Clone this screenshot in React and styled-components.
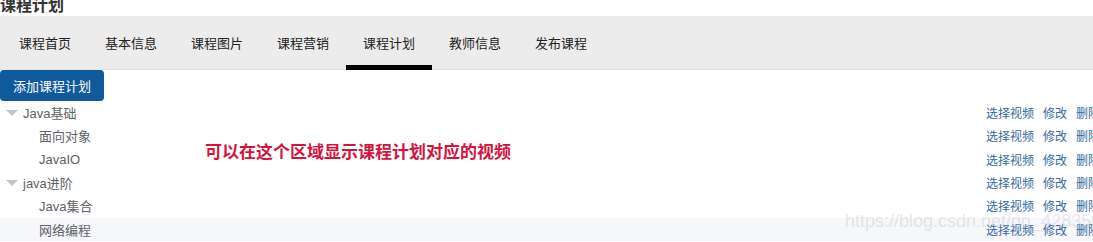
import React from 'react'
import styled, {createGlobalStyle} from 'styled-components'

const GlobalStyle = createGlobalStyle`
    html, body {
        margin: 0;
        padding: 0;
        overflow: hidden;
        background: #fff;
    }
    body {
        font-family: "Liberation Sans", "Noto Sans CJK SC", sans-serif;
    }
`;

const Page = styled.div`
    width: 1102px;
    position: relative;
`;

const Title = styled.h3`
    margin: -4px 0 0 0;
    height: 20px;
    line-height: 20px;
    font-size: 16px;
    font-weight: bold;
    color: #333;
`;

const TabBar = styled.nav`
    display: flex;
    width: 1093px;
    height: 54px;
    padding-left: 2px;
    background: #ececec;
    border-bottom: 1px solid #e3e3e3;
    box-sizing: border-box;
`;

const Tab = styled.div`
    box-sizing: border-box;
    height: 54px;
    padding: 3px 17px 0;
    display: flex;
    align-items: center;
    font-size: 13px;
    color: #222;
    border-bottom: 5px solid ${props => props.active ? '#000' : 'transparent'};
    cursor: pointer;
`;

const Toolbar = styled.div`
    display: flex;
`;

const AddButton = styled.button`
    height: 31px;
    padding: 0 13px;
    border: none;
    border-radius: 4px;
    background: #0f5a9b;
    color: #fff;
    font-family: inherit;
    font-size: 13px;
    cursor: pointer;
`;

const Tree = styled.div`
    position: relative;
`;

const Row = styled.div`
    display: flex;
    align-items: center;
    height: 23.33px;
    padding-left: ${props => props.level * 16}px;
    background: ${props => props.hover ? '#f5f7fa' : 'transparent'};
    font-size: 13px;
    color: #606266;
`;

const Caret = styled.span`
    width: 12px;
    height: 12px;
    margin: 0 5px 0 6px;
    display: flex;
    align-items: center;
    justify-content: center;
    &::before {
        content: '';
        display: ${props => props.leaf ? 'none' : 'block'};
        border-left: 6px solid transparent;
        border-right: 6px solid transparent;
        border-top: 6px solid #c0c4cc;
    }
`;

const Label = styled.span`
    flex: 1;
`;

const Actions = styled.div`
    display: flex;
    gap: 9px;
    width: 116px;
`;

const Action = styled.a`
    font-size: 12px;
    color: #346aa0;
    text-decoration: none;
    white-space: nowrap;
    cursor: pointer;
`;

const Note = styled.div`
    position: absolute;
    left: 205px;
    top: 41px;
    font-family: "Noto Sans CJK SC", sans-serif;
    font-size: 17px;
    line-height: 17px;
    font-weight: bold;
    color: #d3143d;
`;

const Watermark = styled.div`
    position: absolute;
    left: 845px;
    top: 110px;
    font-family: "Liberation Sans", sans-serif;
    font-size: 18px;
    color: rgba(190, 190, 190, 0.35);
    pointer-events: none;
    white-space: nowrap;
`;

const tabs = ['课程首页', '基本信息', '课程图片', '课程营销', '课程计划', '教师信息', '发布课程']

const nodes = [
    {label: 'Java基础', level: 0},
    {label: '面向对象', level: 1},
    {label: 'JavaIO', level: 1},
    {label: 'java进阶', level: 0},
    {label: 'Java集合', level: 1},
    {label: '网络编程', level: 1, hover: true},
]

export default function App() {
    return (
        <Page>
            <GlobalStyle />
            <Title>课程计划</Title>
            <TabBar>
                {tabs.map(t => (
                    <Tab key={t} active={t === '课程计划'}>{t}</Tab>
                ))}
            </TabBar>
            <Toolbar>
                <AddButton>添加课程计划</AddButton>
            </Toolbar>
            <Tree>
                {nodes.map(n => (
                    <Row key={n.label} level={n.level} hover={n.hover}>
                        <Caret leaf={n.level > 0} />
                        <Label>{n.label}</Label>
                        <Actions>
                            <Action>选择视频</Action>
                            <Action>修改</Action>
                            <Action>删除</Action>
                        </Actions>
                    </Row>
                ))}
                <Note>可以在这个区域显示课程计划对应的视频</Note>
                <Watermark>https://blog.csdn.net/qq_42835078</Watermark>
            </Tree>
        </Page>
    )
}
